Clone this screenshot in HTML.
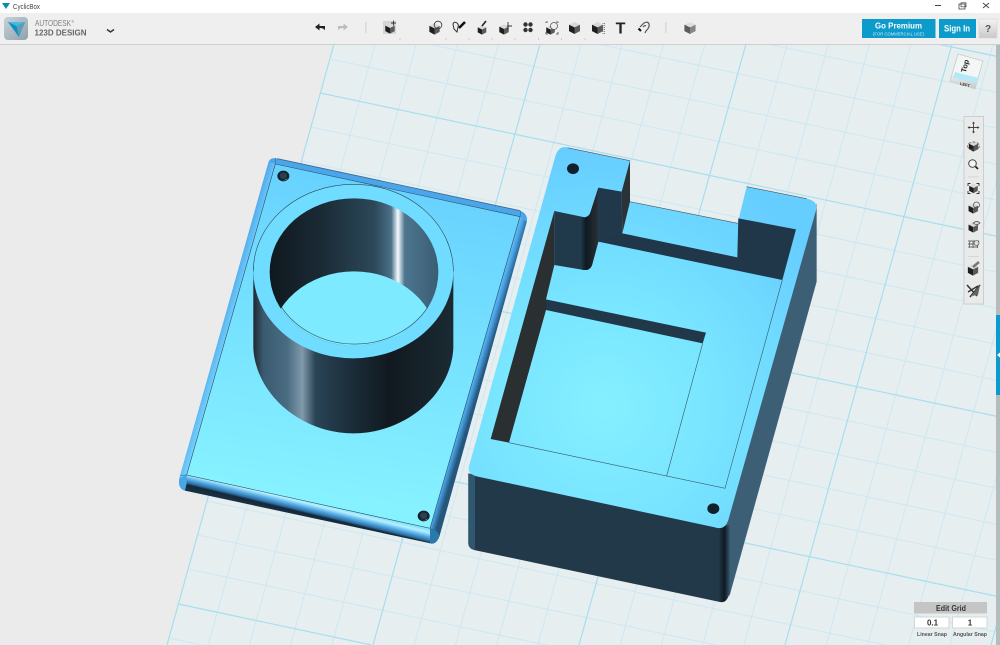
<!DOCTYPE html>
<html><head><meta charset="utf-8"><title>CyclicBox</title>
<style>
html,body{margin:0;padding:0;background:#ebebeb}
body{width:1000px;height:645px;overflow:hidden;position:relative;font-family:"Liberation Sans",sans-serif}
svg{position:absolute;left:0;top:0;display:block}
text{font-family:"Liberation Sans",sans-serif}
.s{filter:blur(.3px)}
</style></head><body>
<svg width="1000" height="645" viewBox="0 0 1000 645" xmlns="http://www.w3.org/2000/svg">
<defs>
<radialGradient id="boxf" gradientUnits="userSpaceOnUse" cx="430" cy="800" r="780"><stop offset="0" stop-color="#85f0ff"/><stop offset=".45" stop-color="#78e4ff"/><stop offset="1" stop-color="#66cdff"/></radialGradient>
<linearGradient id="platef" gradientUnits="userSpaceOnUse" x1="620" y1="100" x2="470" y2="1100"><stop offset="0" stop-color="#68d2ff"/><stop offset="1" stop-color="#88f3ff"/></linearGradient>
<linearGradient id="cyl" gradientUnits="userSpaceOnUse" x1="250" y1="0" x2="850" y2="0"><stop offset="0" stop-color="#20282c"/><stop offset=".05" stop-color="#3a5a70"/><stop offset=".17" stop-color="#4a6c82"/><stop offset=".245" stop-color="#8099ab"/><stop offset=".31" stop-color="#2a4456"/><stop offset=".5" stop-color="#1a2c38"/><stop offset=".68" stop-color="#11191f"/><stop offset="1" stop-color="#1b2a33"/></linearGradient>
<linearGradient id="holeg" gradientUnits="userSpaceOnUse" x1="300" y1="0" x2="805" y2="0"><stop offset="0" stop-color="#10181e"/><stop offset=".3" stop-color="#1a2a35"/><stop offset=".62" stop-color="#2c4858"/><stop offset=".72" stop-color="#4a7088"/><stop offset=".76" stop-color="#f4fbff"/><stop offset=".8" stop-color="#4d758e"/><stop offset="1" stop-color="#3b5d74"/></linearGradient>
<linearGradient id="bb" gradientUnits="userSpaceOnUse" x1="417" y1="1052" x2="405" y2="1102"><stop offset="0" stop-color="#80e4ff"/><stop offset=".18" stop-color="#b8f0ff"/><stop offset=".42" stop-color="#55aee8"/><stop offset=".66" stop-color="#2b6a9c"/><stop offset=".76" stop-color="#14283a"/><stop offset="1" stop-color="#1a3040"/></linearGradient>
<linearGradient id="rb" gradientUnits="userSpaceOnUse" x1="905" y1="640" x2="945" y2="652"><stop offset="0" stop-color="#86d8ff"/><stop offset=".55" stop-color="#4aa6ea"/><stop offset="1" stop-color="#25567c"/></linearGradient>
<linearGradient id="lb" gradientUnits="userSpaceOnUse" x1="150" y1="500" x2="190" y2="512"><stop offset="0" stop-color="#4aa4e8"/><stop offset="1" stop-color="#78d4ff"/></linearGradient>
<linearGradient id="curve" gradientUnits="userSpaceOnUse" x1="362" y1="0" x2="416" y2="0"><stop offset="0" stop-color="#213a4b"/><stop offset=".3" stop-color="#0e1a22"/><stop offset="1" stop-color="#2a3134"/></linearGradient>
<linearGradient id="corn" gradientUnits="userSpaceOnUse" x1="775" y1="0" x2="812" y2="0"><stop offset="0" stop-color="#22394a"/><stop offset=".5" stop-color="#0f1a22"/><stop offset="1" stop-color="#3d5f76"/></linearGradient>
<linearGradient id="logo" x1="0" y1="0" x2="1" y2="1"><stop offset="0" stop-color="#c6d2d8"/><stop offset="1" stop-color="#8ea2ac"/></linearGradient>
<linearGradient id="qb" x1="0" y1="0" x2="0" y2="1"><stop offset="0" stop-color="#f4f4f4"/><stop offset="1" stop-color="#c8c8c8"/></linearGradient>
<linearGradient id="vcf" x1="0" y1="0" x2="0" y2="1"><stop offset="0" stop-color="#f2f2f2"/><stop offset="1" stop-color="#c4c8c8"/></linearGradient>
<symbol id="c" viewBox="0 0 12 14"><polygon points="6,0.5 12,3.4 6,6.3 0,3.4" fill="#d8d8d8"/><polygon points="0,3.4 6,6.3 6,13.5 0,10.4" fill="#1e1e1e"/><polygon points="12,3.4 12,10.4 6,13.5 6,6.3" fill="#5a5a5a"/></symbol>
</defs>

<!-- viewport -->
<rect x="0" y="44" width="1000" height="601" fill="#ebebeb"/>
<polygon points="334,44 1000,44 1000,645 167,645" fill="#e6eef0"/>
<g fill="none">
<path stroke="#cde8f2" stroke-width="1" d="M375.200 44L208.200 645M416.400 44L249.400 645M457.600 44L290.600 645M498.800 44L331.800 645M581.200 44L414.200 645M622.400 44L455.400 645M663.600 44L496.600 645M704.800 44L537.800 645M787.200 44L620.200 645M828.400 44L661.400 645M869.600 44L702.600 645M910.800 44L743.800 645M993.200 44L826.200 645M1000 168L867.400 645M1000 316L908.600 645M1000 464L949.800 645"/>
<path stroke="#cde8f2" stroke-width="1" d="M768 44L1000 93M598 44L1000 129M428 44L1000 165M330 59L1000 201M311 127L1000 273M301.500 161L1000 309M292 195L1000 345M282.600 229L1000 381M263.700 297L1000 453M254.200 331L1000 489M244.800 365L1000 525M235.300 399L1000 561M216.400 467L1000 633M207 501L885.500 645M197.500 535L715.700 645M188 569L546 645M168.900 638L201.600 645"/>
<path stroke="#a8deef" stroke-width="1.200" d="M334 44L167 645M540 44L373 645M746 44L579 645M952 44L785 645M1000 612L991 645"/>
<path stroke="#a8deef" stroke-width="1.200" d="M937.400 44L1000 57M320.400 93L1000 237M273.100 263L1000 417M225.900 433L1000 597M178.400 604L371.400 645"/>
</g>

<!-- lid plate -->
<g transform="translate(170,150) scale(.33333)">
<path d="M296,35 Q303,20 322,26 L1050,182 Q1076,192 1070,218 L808,1160 Q798,1186 772,1178 L45,1022 Q22,1015 28,985 Z" fill="#4aa5ea"/>
<polygon points="316,42 296,35 28,985 50,975" fill="url(#lb)"/>
<polygon points="1050,200 1070,215 808,1160 780,1135" fill="url(#rb)"/>
<path d="M50,975 L780,1135 L782,1180 L772,1178 L45,1022 Q32,1018 30,1002 Z" fill="url(#bb)"/>
<path d="M50,975 Q30,980 28,1000 Q32,1018 45,1022 L50,1000Z" fill="#4aa6e6"/>
<path d="M780,1135 Q806,1140 808,1160 Q798,1186 780,1180Z" fill="#2a78ac"/>
<polygon points="316,42 1050,200 780,1135 50,975" fill="url(#platef)" stroke="#2c5060" stroke-width="1.800"/>
<path d="M316,42 L316,24 M1050,200 L1052,182 M50,975 L30,976" stroke="#2c5060" stroke-width="1.300" fill="none"/>
<path d="M322,26 L1050,182" stroke="#3a6a8a" stroke-width="2.500" fill="none"/>
<!-- cylinder -->
<path d="M250,350 L250,595 C258,735 395,850 550,850 C705,850 842,735 850,595 L850,350 Z" fill="url(#cyl)"/>
<ellipse cx="550" cy="364" rx="300" ry="261" fill="#70dcff"/>
<path d="M250,364 A300,261 0 0 1 850,364" fill="none" stroke="#2c4a58" stroke-width="1.800"/>
<ellipse cx="552" cy="366" rx="253" ry="221" fill="url(#holeg)"/>
<clipPath id="hc"><ellipse cx="552" cy="366" rx="253" ry="221"/></clipPath>
<g clip-path="url(#hc)"><ellipse cx="552" cy="586" rx="253" ry="222" fill="#7deaff"/></g>
<path d="M335,472 A253,221 0 0 0 773,472" fill="none" stroke="#2c5060" stroke-width="1.800"/>
<!-- holes -->
<ellipse cx="340" cy="78" rx="18" ry="16" fill="#13202a"/><path d="M330,87 Q342,95 353,84 L350,88 Q340,94 330,87Z" fill="#cfe4ea"/>
<ellipse cx="340" cy="77" rx="11" ry="10" fill="#2a4050"/>
<ellipse cx="761" cy="1098" rx="18" ry="16" fill="#13202a"/><path d="M751,1107 Q763,1115 774,1104 L771,1108 Q761,1114 751,1107Z" fill="#cfe4ea"/>
<ellipse cx="761" cy="1097" rx="11" ry="10" fill="#2a4050"/>
</g>

<!-- box -->
<g transform="translate(460,140) scale(.33333)">
<polygon points="1070,190 1070,425 808,1370 790,1165" fill="#3d5f76"/>
<path d="M25,1000 L780,1160 L808,1160 L808,1360 Q800,1392 775,1385 L42,1230 Q24,1225 25,1208 Z" fill="#22394a"/>
<path d="M25,1000 L45,1005 L45,1230 Q24,1225 25,1208Z" fill="#2f5870"/>
<path d="M778,1160 L808,1155 L808,1360 Q800,1392 778,1385Z" fill="url(#corn)"/>
<path d="M285,52 Q296,14 322,23 L510,62 L510,185 L833,250 L860,140 L1040,176 Q1078,184 1067,215 L805,1140 Q794,1172 765,1162 L50,1009 Q16,1000 30,968 Z" fill="url(#boxf)"/>
<path d="M322,23 L510,62 M510,185 L833,250 M860,140 L1040,176" stroke="#46565e" stroke-width="1.800" fill="none"/>
<!-- left wall -->
<polygon points="283,213 283,375 258,478 258,510 147,908 92,897" fill="#2a3032"/>
<!-- step wall -->
<path d="M283,213 L375,232 Q388,230 392,215 L415,143 L415,305 L397,372 Q392,392 372,390 L283,375 Z" fill="#213a4b"/>
<path d="M362,232 L375,232 Q388,230 392,215 L415,143 L415,305 L397,372 Q392,392 372,390 L362,388 Z" fill="url(#curve)"/>
<!-- back wall pieces -->
<polygon points="415,143 485,155 487,305 415,305" fill="#20384a"/>
<polygon points="510,62 510,185 487,280 485,155" fill="#2c3336"/>
<polygon points="415,305 487,280 832,352 835,235 1008,268 967,420" fill="#1f3748"/>
<!-- slot -->
<polygon points="258,478 738,578 728,610 258,510" fill="#20384a"/>
<!-- floor lines -->
<path d="M147,908 L795,1045 L967,420 M620,1008 L728,610" fill="none" stroke="#355866" stroke-width="1.800"/>
<!-- holes -->
<ellipse cx="339" cy="86" rx="18" ry="16" fill="#11202a"/>
<ellipse cx="760" cy="1106" rx="18" ry="16" fill="#11202a"/>
</g>

<!-- right edge -->
<rect x="996" y="44" width="4" height="601" fill="#b5bcbc"/>
<rect x="996" y="315" width="4" height="80" fill="#0b9ccf"/>
<polygon points="997,355 1000,352.500 1000,357.500" fill="#fff"/>

<!-- title bar -->
<rect x="0" y="0" width="1000" height="13" fill="#fff"/>
<polygon points="2,3 10,3 6,9" fill="#0e8ab5"/>
<text x="13" y="9" font-size="7" fill="#444" textLength="27" lengthAdjust="spacingAndGlyphs">CyclicBox</text>
<rect x="935" y="5" width="6" height="1" fill="#444"/>
<rect x="959" y="4" width="6" height="5" fill="none" stroke="#444" stroke-width=".8"/>
<rect x="961" y="2.800" width="5" height="4" fill="none" stroke="#444" stroke-width=".7"/>
<path d="M983 3L989 8M989 3L983 8" stroke="#444" stroke-width=".9"/>

<!-- toolbar -->
<rect x="0" y="13" width="1000" height="31" fill="#efefef"/>
<rect x="0" y="44" width="1000" height="1" fill="#cfcfcf"/>
<rect x="4" y="17" width="24" height="23" rx="4" fill="url(#logo)"/>
<polygon points="8,22 25,22 19,37" fill="#0d8fc0"/>
<polygon points="16.500,26 25,22 19,37" fill="#5f9db5"/>
<polygon points="8,22 25,22 16.500,26" fill="#46bce4"/>
<text x="35" y="26" font-size="8.200" fill="#7f7f7f" textLength="36" lengthAdjust="spacingAndGlyphs">AUTODESK</text>
<text x="71.500" y="23" font-size="3.500" fill="#7f7f7f">®</text>
<text x="34.500" y="35.500" font-size="8.400" font-weight="bold" fill="#666" textLength="52" lengthAdjust="spacingAndGlyphs">123D DESIGN</text>
<path d="M107 29.500L110.500 32L114 29.500" fill="none" stroke="#333" stroke-width="1.500"/>

<g class="s">
<!-- undo/redo -->
<path d="M315 27L319.500 23.500V26H325V30.500Q324 28 319.500 28V30.500Z" fill="#222"/>
<path d="M348 27L343.500 23.500V26H338V30.500Q339 28 343.500 28V30.500Z" fill="#bdbdbd"/>
<rect x="365.500" y="22" width=".8" height="11" fill="#c6c6c6"/>
<rect x="383" y="21" width="13" height="13" fill="#d5d5d5"/>
<use href="#c" x="385" y="23" width="10" height="11"/>
<path d="M391 23H396M393.500 20.500V25.500" stroke="#333" stroke-width=".9"/>
<rect x="665.500" y="22" width=".8" height="11" fill="#c6c6c6"/>

<!-- tools -->
<use href="#c" x="429" y="23" width="11" height="12"/>
<circle cx="438" cy="25" r="3.800" fill="none" stroke="#444" stroke-width=".9"/>
<path d="M453 24Q454 21 457 23Q459 25 458 27L457 32L454 29Z" fill="none" stroke="#333" stroke-width="1"/>
<path d="M459 28L465 22" stroke="#111" stroke-width="2.600"/>
<use href="#c" x="477" y="25" width="10" height="10"/>
<path d="M482 26L486 21" stroke="#222" stroke-width="1.600"/>
<use href="#c" x="499" y="24" width="10" height="11"/>
<path d="M507 26H512M508 22L508 30" stroke="#333" stroke-width=".9"/>
<g fill="#333"><circle cx="525.500" cy="24.500" r="2.200"/><circle cx="530.500" cy="24.500" r="2.200"/><circle cx="525.500" cy="30" r="2.200"/><circle cx="530.500" cy="30" r="2.200"/></g>
<use href="#c" x="546" y="25" width="9" height="10"/>
<circle cx="554" cy="26" r="3.500" fill="#eee" stroke="#555" stroke-width=".8"/>
<path d="M546 23V22H548M556 22H558V23M546 32V34H548M556 34H558V32" fill="none" stroke="#444" stroke-width=".8"/>
<use href="#c" x="569" y="21.500" width="11" height="13"/>
<use href="#c" x="592" y="21.500" width="11" height="13"/>
<path d="M603 23V34M604.500 23V34" stroke="#777" stroke-width=".9" stroke-dasharray="1 1"/>
<text x="620.500" y="33.500" font-size="16" font-weight="bold" fill="#222" text-anchor="middle">T</text>
<path d="M640 27L644 23Q648 21 649 24Q650 27 646 31L645 33M643 27Q645 25 646 26" fill="none" stroke="#555" stroke-width="1.200"/>
<path d="M638.500 28.500L641 31" stroke="#111" stroke-width="2"/>
<g opacity=".7"><use href="#c" x="684" y="21.500" width="12" height="13"/></g>
<g fill="#aaa"><rect x="399.500" y="38.500" width="1" height="1"/><rect x="445.500" y="38.500" width="1" height="1"/><rect x="468.500" y="38.500" width="1" height="1"/><rect x="491.500" y="38.500" width="1" height="1"/><rect x="514.500" y="38.500" width="1" height="1"/><rect x="538" y="38.500" width="1" height="1"/><rect x="561" y="38.500" width="1" height="1"/><rect x="584.500" y="38.500" width="1" height="1"/></g>
</g>

<!-- buttons -->
<rect x="862" y="19" width="73.500" height="19" fill="#0c9bcb"/>
<text x="875" y="28.500" font-size="8.500" font-weight="bold" fill="#fff" textLength="47" lengthAdjust="spacingAndGlyphs">Go Premium</text>
<text x="873" y="35.500" font-size="4.200" fill="#cdeaf5" textLength="51" lengthAdjust="spacingAndGlyphs">(FOR COMMERCIAL USE)</text>
<rect x="939" y="19" width="37" height="19" fill="#0c9bcb"/>
<text x="944" y="31.500" font-size="9" font-weight="bold" fill="#fff" textLength="26" lengthAdjust="spacingAndGlyphs">Sign In</text>
<rect x="979" y="19" width="18" height="19" fill="url(#qb)" stroke="#d5d5d5" stroke-width=".6"/>
<text x="988" y="32" font-size="10" font-weight="bold" fill="#555" text-anchor="middle">?</text>

<!-- view cube -->
<g class="s">
<polygon points="958,54 983,61 975,89 950,81" fill="#f4f5f5"/>
<polygon points="950,74 977,82 975,89 950,81" fill="url(#vcf)"/>
<polygon points="958,54 983,61 975,89 950,81" fill="none" stroke="#c8cccc" stroke-width=".8"/>
<polygon points="955,72 979,78 977,83 953,78" fill="#b4e9f8"/>
</g>
<text transform="translate(965,66) rotate(-75)" font-size="7.500" font-weight="bold" fill="#222" text-anchor="middle" y="2.500">Top</text>
<text transform="translate(965,84.500) rotate(14)" font-size="4" font-weight="bold" fill="#333" text-anchor="middle" y="1.500">LEFT</text>

<!-- right nav -->
<rect x="964" y="116.500" width="19.500" height="187.500" fill="#e9eaea" stroke="#cdcdcd" stroke-width="1"/>
<g class="s">
<path d="M973.500 122.500V132.500M968.500 127.500H978.500" stroke="#444" stroke-width=".9"/>
<path d="M973.500 121.500l-1.500 2h3zM973.500 133.500l-1.500-2h3zM967.500 127.500l2-1.500v3zM979.500 127.500l-2-1.500v3z" fill="#444"/>
<use href="#c" x="968.500" y="141" width="10" height="11"/>
<ellipse cx="973.500" cy="146" rx="6" ry="4" fill="none" stroke="#666" stroke-width=".8" stroke-dasharray="3 1.500"/>
<circle cx="972.500" cy="163.500" r="3.800" fill="#f4f4f4" stroke="#444" stroke-width="1"/>
<path d="M975.500 166.500L978 169" stroke="#222" stroke-width="1.800"/>
<rect x="968" y="176.500" width="11" height=".7" fill="#cfcfcf"/>
<use href="#c" x="969" y="183.500" width="9" height="10"/>
<path d="M968 186V183.500H970.500M976.500 183.500H979V186M968 191V193.500H970.500M976.500 193.500H979V191" fill="none" stroke="#333" stroke-width=".9"/>
<use href="#c" x="968" y="203" width="10.500" height="11"/>
<circle cx="976.500" cy="205" r="3" fill="none" stroke="#555" stroke-width=".8"/>
<use href="#c" x="968" y="222" width="10.500" height="11"/>
<path d="M973 223Q977 220 980 223Q977 226 973 223Z" fill="#ddd" stroke="#444" stroke-width=".7"/>
<g fill="none" stroke="#444" stroke-width=".7"><path d="M968 241H979M968 244H979M968.500 247H978M970 241L969 248M973 241L973 248M977 241L977.500 248"/></g>
<circle cx="976.500" cy="243" r="2.500" fill="#ddd" stroke="#444" stroke-width=".6"/>
<rect x="968" y="256" width="11" height=".7" fill="#cfcfcf"/>
<use href="#c" x="967.500" y="264" width="11" height="12"/>
<path d="M973 267L979 262" stroke="#777" stroke-width="2.500"/>
<path d="M967 285L977 296M980 285L970 297M968 292L978 286" stroke="#333" stroke-width="1.500"/>
<path d="M971 296L980 285L978 295Z" fill="#666"/>
</g>

<!-- edit grid -->
<rect x="914" y="602" width="73" height="11.500" fill="#c5c5c5"/>
<text x="936" y="611" font-size="8" font-weight="bold" fill="#333" textLength="30" lengthAdjust="spacingAndGlyphs">Edit Grid</text>
<rect x="914.500" y="617" width="34.500" height="11" fill="#fff" stroke="#d5d5d5"/>
<rect x="952.500" y="617" width="34.500" height="11" fill="#fff" stroke="#d5d5d5"/>
<text x="932.500" y="625.500" font-size="8" font-weight="bold" fill="#333" text-anchor="middle">0.1</text>
<text x="970" y="625.500" font-size="8" font-weight="bold" fill="#333" text-anchor="middle">1</text>
<text x="917" y="636" font-size="5.200" font-weight="bold" fill="#555" textLength="30" lengthAdjust="spacingAndGlyphs">Linear Snap</text>
<text x="953" y="636" font-size="5.200" font-weight="bold" fill="#555" textLength="34" lengthAdjust="spacingAndGlyphs">Angular Snap</text>
</svg>
</body></html>
